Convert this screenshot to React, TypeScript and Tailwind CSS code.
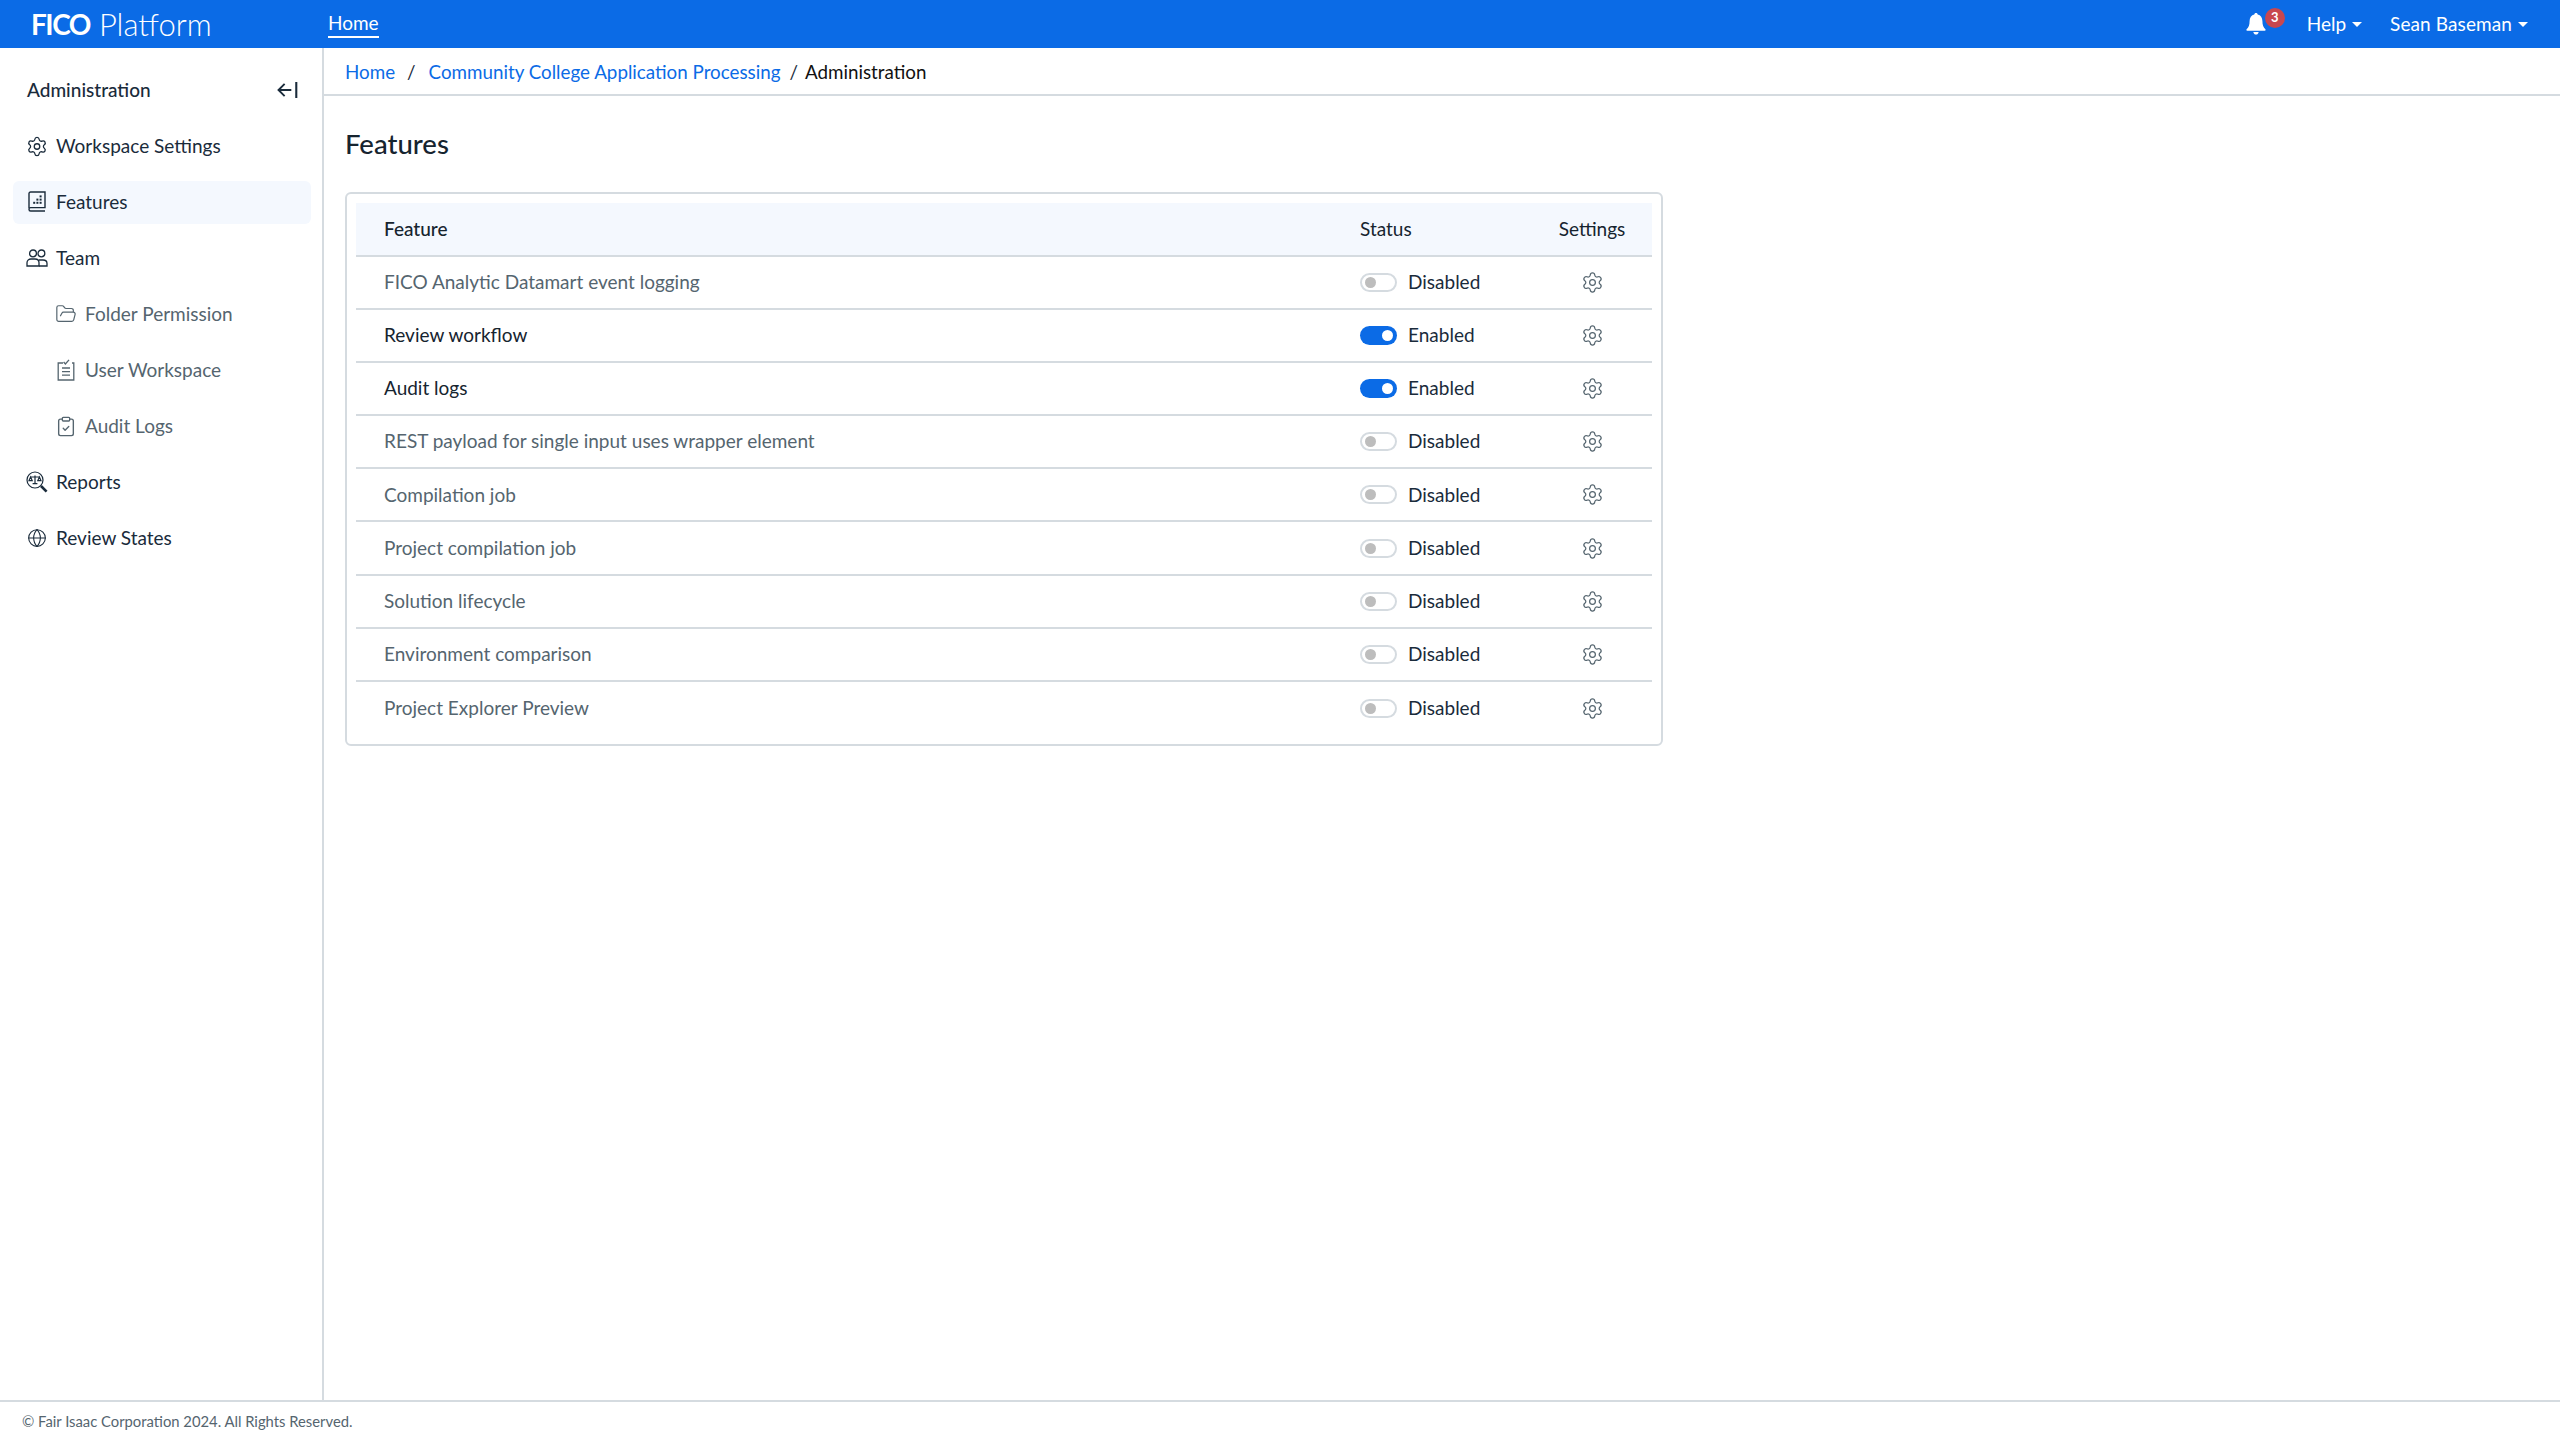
import { ClipboardCheck, FolderOpen, Globe, Settings } from 'lucide-react'
import type { JSX, ReactNode } from 'react'

function FeaturesIcon(): JSX.Element {
  return (
    <svg viewBox="0 0 20 22" className="h-[22px] w-[20px]" fill="none" stroke="currentColor" strokeWidth="1.4">
      <path d="M2 17V2.6C2 1.7 2.7 1 3.6 1H18v15.6H3.6C2.7 16.6 2 17.2 2 18.2S2.7 20 3.6 20H18" />
      <rect x="12.6" y="4.4" width="2" height="2" fill="currentColor" stroke="none" />
      <rect x="12.6" y="7.6" width="2" height="2" fill="currentColor" stroke="none" />
      <rect x="12.6" y="10.8" width="2" height="2" fill="currentColor" stroke="none" />
      <rect x="9.4" y="7.6" width="2" height="2" fill="currentColor" stroke="none" />
      <rect x="9.4" y="10.8" width="2" height="2" fill="currentColor" stroke="none" />
      <rect x="6.2" y="10.8" width="2" height="2" fill="currentColor" stroke="none" />
    </svg>
  )
}

function TeamIcon(): JSX.Element {
  return (
    <svg viewBox="0 0 22 18" className="h-[18px] w-[22px]" fill="none" stroke="currentColor" strokeWidth="1.3">
      <circle cx="7" cy="4.4" r="3.4" />
      <circle cx="15.4" cy="4.4" r="3.4" />
      <path d="M1 17v-3.2C1 11.4 3 10 5 10h4c2.4 0 4 1.6 4 3.8V17z" />
      <path d="M13 11h4c2.2 0 4 1.2 4 3.4V17h-8" />
    </svg>
  )
}

function WorkspaceIcon(): JSX.Element {
  return (
    <svg viewBox="0 0 18 22" className="h-[22px] w-[18px]" fill="none" stroke="currentColor" strokeWidth="1.3">
      <path d="M6 4H1.2v17h15.6V4H15" />
      <path d="M6.600 3l1.800 2L12 .8" />
      <path d="M5 9h8M5 12.600h8M5 16.200h8" />
    </svg>
  )
}

function ReportsIcon(): JSX.Element {
  return (
    <svg viewBox="0 0 22 22" className="h-[22px] w-[22px]" fill="none" stroke="currentColor" strokeWidth="1.2">
      <circle cx="9" cy="9" r="8" />
      <path d="M9 4.600v8M6.600 12.600h4.800M4.600 6h8.800" />
      <path d="M4.600 6L3 9.600h3.200zM13.400 6l-1.600 3.600H15z" />
      <path d="M15 15l5.600 5.600" strokeWidth="2.600" />
    </svg>
  )
}

function CollapseIcon(): JSX.Element {
  return (
    <svg viewBox="0 0 22 18" className="h-[18px] w-[21px]" fill="none" stroke="#1a2b3b" strokeWidth="2">
      <path d="M15 9H2M8 2.600L1.600 9 8 15.400" />
      <path d="M20.200 0.600v16.800" strokeWidth="2.200" />
    </svg>
  )
}

function BellIcon(): JSX.Element {
  return (
    <svg viewBox="0 0 20 22" className="h-[22px] w-[20px]" fill="white">
      <path d="M10 0c1 0 1.700.7 1.700 1.600 3 .7 4.700 3.300 4.700 6.400 0 4.400 1 6.200 3 8.200.5.600.2 1.500-.6 1.500H1.200c-.8 0-1.100-.9-.6-1.500 2-2 3-3.800 3-8.200 0-3.100 1.700-5.700 4.700-6.400C8.300.7 9 0 10 0z" />
      <path d="M7.400 19h5.200c0 1.500-1.100 2.600-2.600 2.600S7.400 20.500 7.400 19z" />
    </svg>
  )
}

function Caret(): JSX.Element {
  return <span className="ml-[6px] h-0 w-0 border-x-[5px] border-t-[5px] border-x-transparent border-t-white" />
}

function NavRow({ icon, label, active, child }: { icon: ReactNode; label: string; active?: boolean; child?: boolean }): JSX.Element {
  return (
    <div
      className={`flex h-[43px] items-center rounded-[6px] ${active ? 'bg-[#f4f8fe]' : ''} ${child ? 'pl-[42px] text-[#55656f]' : 'pl-[13px] text-[#1a2b3b]'}`}
    >
      <span className="flex w-[22px] justify-center">{icon}</span>
      <span className="ml-[8px]">{label}</span>
    </div>
  )
}

function Toggle({ on }: { on: boolean }): JSX.Element {
  if (on) {
    return (
      <span className="flex h-[19px] w-[37px] items-center justify-end rounded-full bg-[#0b6be6] pr-[4px]">
        <span className="h-[11px] w-[11px] rounded-full bg-white" />
      </span>
    )
  }
  return (
    <span className="flex h-[19px] w-[37px] items-center rounded-full border-2 border-[#d5dbe0] pl-[3px]">
      <span className="h-[11px] w-[11px] rounded-full bg-[#bdbdbd]" />
    </span>
  )
}

const features = [
  { name: 'FICO Analytic Datamart event logging', on: false },
  { name: 'Review workflow', on: true },
  { name: 'Audit logs', on: true },
  { name: 'REST payload for single input uses wrapper element', on: false },
  { name: 'Compilation job', on: false },
  { name: 'Project compilation job', on: false },
  { name: 'Solution lifecycle', on: false },
  { name: 'Environment comparison', on: false },
  { name: 'Project Explorer Preview', on: false },
]

export default function App(): JSX.Element {
  return (
    <div className="flex h-screen flex-col bg-white font-['Lato',sans-serif] text-[19px] text-[#1a2b3b]">
      {/* Top bar */}
      <header className="flex h-[48px] shrink-0 items-center bg-[#0b6be6] text-white">
        <div className="flex w-[328px] items-center pl-[31px]">
          <span className="text-[28px] leading-none font-bold tracking-[-1.5px]">FICO</span>
          <span className="ml-[9px] text-[31px] leading-none font-light">Platform</span>
        </div>
        <span className="border-b-2 border-white leading-[26px]">Home</span>
        <div className="ml-auto flex items-center pr-[32px]">
          <div className="relative mr-[41px] flex">
            <BellIcon />
            <span className="absolute top-[-5px] left-[19px] flex h-[20px] w-[20px] items-center justify-center rounded-full bg-[#c8474f] text-[13px] font-bold">
              3
            </span>
          </div>
          <span>Help</span>
          <Caret />
          <span className="ml-[28px] tracking-[0.1px]">Sean Baseman</span>
          <Caret />
        </div>
      </header>

      <div className="flex min-h-0 flex-1">
        {/* Sidebar */}
        <aside className="flex w-[324px] shrink-0 flex-col gap-[13px] border-r-2 border-[#d5dbe0] pt-[20.5px] pr-[11px] pl-[13px]">
          <div className="flex h-[43px] items-center justify-between pr-[13px] pl-[14px]">
            <span className="font-medium">Administration</span>
            <CollapseIcon />
          </div>
          <NavRow icon={<Settings size={23} strokeWidth={1.4} />} label="Workspace Settings" />
          <NavRow icon={<FeaturesIcon />} label="Features" active />
          <NavRow icon={<TeamIcon />} label="Team" />
          <NavRow icon={<FolderOpen size={22} strokeWidth={1.3} />} label="Folder Permission" child />
          <NavRow icon={<WorkspaceIcon />} label="User Workspace" child />
          <NavRow icon={<ClipboardCheck size={23} strokeWidth={1.5} />} label="Audit Logs" child />
          <NavRow icon={<ReportsIcon />} label="Reports" />
          <NavRow icon={<Globe size={20} strokeWidth={1.3} />} label="Review States" />
        </aside>

        <main className="flex-1">
          {/* Breadcrumb */}
          <div className="flex h-[48px] items-center border-b-2 border-[#d5dbe0] pt-[2px] pl-[21px] text-[18.8px]">
            <span className="text-[#0b6be6]">Home</span>
            <span className="ml-[12px] text-[#1a2b3b]">/</span>
            <span className="ml-[13px] text-[#0b6be6]">Community College Application Processing</span>
            <span className="ml-[9px] text-[#1a2b3b]">/</span>
            <span className="ml-[7px] text-[#111111]">Administration</span>
          </div>

          <div className="pt-[30px] pl-[21px]">
            <h1 className="text-[27.5px] leading-[36px] font-medium text-[#16242f]">Features</h1>

            {/* Feature table */}
            <div className="mt-[30px] h-[554px] w-[1318px] rounded-[6px] border-2 border-[#d5dbe0] p-[9px]">
              <div className="grid h-[53.5px] grid-cols-[976px_172px_120px] items-center border-b-2 border-[#d5dbe0] bg-[#f4f8fe] pl-[28px] text-[#16242f]">
                <span className="font-medium">Feature</span>
                <span>Status</span>
                <span className="text-center">Settings</span>
              </div>
              {features.map((f, i) => (
                <div
                  key={f.name}
                  className={`grid h-[53.2px] grid-cols-[976px_172px_120px] items-center pl-[28px] ${i < features.length - 1 ? 'border-b-2 border-[#d5dbe0]' : ''}`}
                >
                  <span className={f.on ? 'text-[#16242f]' : 'text-[#55656f]'}>{f.name}</span>
                  <span className="flex items-center gap-[11px]">
                    <Toggle on={f.on} />
                    {f.on ? 'Enabled' : 'Disabled'}
                  </span>
                  <span className="flex justify-center text-[#55656f]">
                    <Settings size={23} strokeWidth={1.3} />
                  </span>
                </div>
              ))}
            </div>
          </div>
        </main>
      </div>

      {/* Footer */}
      <footer className="flex h-[40px] shrink-0 items-center border-t-2 border-[#d5dbe0] pl-[22px] text-[14.8px] text-[#55656f]">
        © Fair Isaac Corporation 2024. All Rights Reserved.
      </footer>
    </div>
  )
}
